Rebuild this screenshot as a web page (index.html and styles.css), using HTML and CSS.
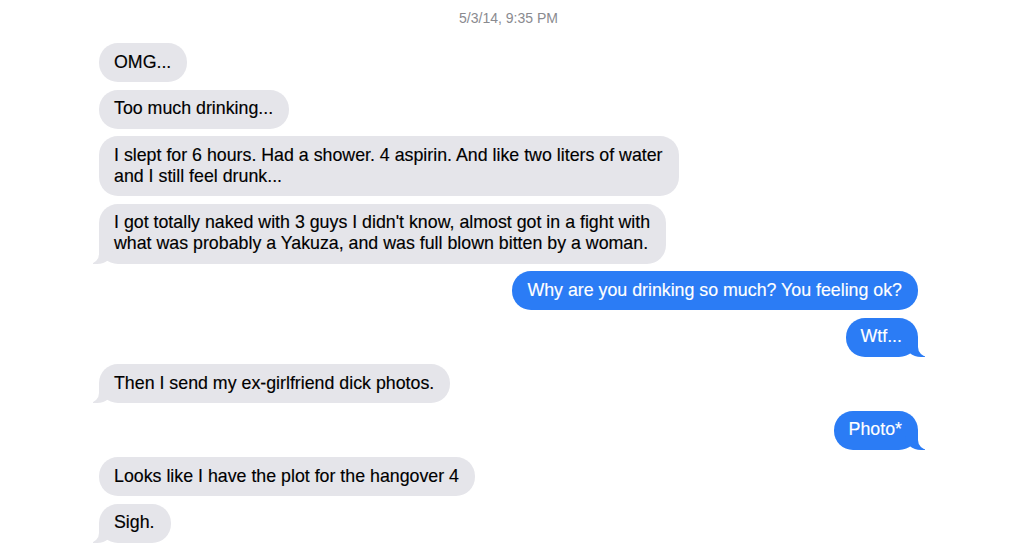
FILE: index.html
```html
<!DOCTYPE html>
<html>
<head>
<meta charset="utf-8">
<link rel="stylesheet" href="styles.css">
</head>
<body>
<main class="thread">
  <div class="stamp">5/3/14, 9:35 PM</div>
  <div class="row them"><div class="bubble">OMG...</div></div>
  <div class="row them"><div class="bubble">Too much drinking...</div></div>
  <div class="row them"><div class="bubble">I slept for 6 hours. Had a shower. 4 aspirin. And like two liters of water<br>and I still feel drunk...</div></div>
  <div class="row them"><div class="bubble tail">I got totally naked with 3 guys I didn't know, almost got in a fight with<br>what was probably a Yakuza, and was full blown bitten by a woman.</div></div>
  <div class="row me"><div class="bubble">Why are you drinking so much? You feeling ok?</div></div>
  <div class="row me"><div class="bubble tail">Wtf...</div></div>
  <div class="row them"><div class="bubble tail">Then I send my ex-girlfriend dick photos.</div></div>
  <div class="row me"><div class="bubble tail">Photo*</div></div>
  <div class="row them"><div class="bubble">Looks like I have the plot for the hangover 4</div></div>
  <div class="row them"><div class="bubble tail">Sigh.</div></div>
</main>
</body>
</html>
```
FILE: styles.css
```css
html, body {
  margin: 0;
  padding: 0;
  background: #ffffff;
}

body {
  font-family: "Liberation Sans", Arial, Helvetica, sans-serif;
  overflow: hidden;
}

.thread {
  display: flex;
  flex-direction: column;
  gap: 7.5px;
  padding: 10px 102px 0 99px;
}

.stamp {
  text-align: center;
  font-size: 14px;
  line-height: 16px;
  color: #8a8a8f;
  margin-bottom: 9.5px;
}

.row {
  display: flex;
}

.row.me {
  justify-content: flex-end;
}

.bubble {
  position: relative;
  z-index: 0;
  font-size: 17.8px;
  line-height: 21px;
  padding: 8.5px 16px 9.5px 15px;
  border-radius: 19px;
  white-space: nowrap;
  -webkit-text-stroke: 0.15px currentColor;
}

.them .bubble {
  background: #e5e5ea;
  color: #000000;
}

.me .bubble {
  background: #2b7cf5;
  color: #ffffff;
}

.bubble.tail::before,
.bubble.tail::after {
  content: "";
  position: absolute;
  z-index: -1;
  bottom: 0;
}

.them .bubble.tail::before {
  left: -6px;
  width: 20px;
  height: 20px;
  background: #e5e5ea;
  border-bottom-right-radius: 16px 14px;
}

.them .bubble.tail::after {
  left: -10px;
  width: 10px;
  height: 20px;
  background: #ffffff;
  border-bottom-right-radius: 10px;
}

.me .bubble.tail::before {
  right: -7px;
  width: 20px;
  height: 20px;
  background: #2b7cf5;
  border-bottom-left-radius: 16px 14px;
}

.me .bubble.tail::after {
  right: -10px;
  width: 10px;
  height: 20px;
  background: #ffffff;
  border-bottom-left-radius: 10px;
}
```
